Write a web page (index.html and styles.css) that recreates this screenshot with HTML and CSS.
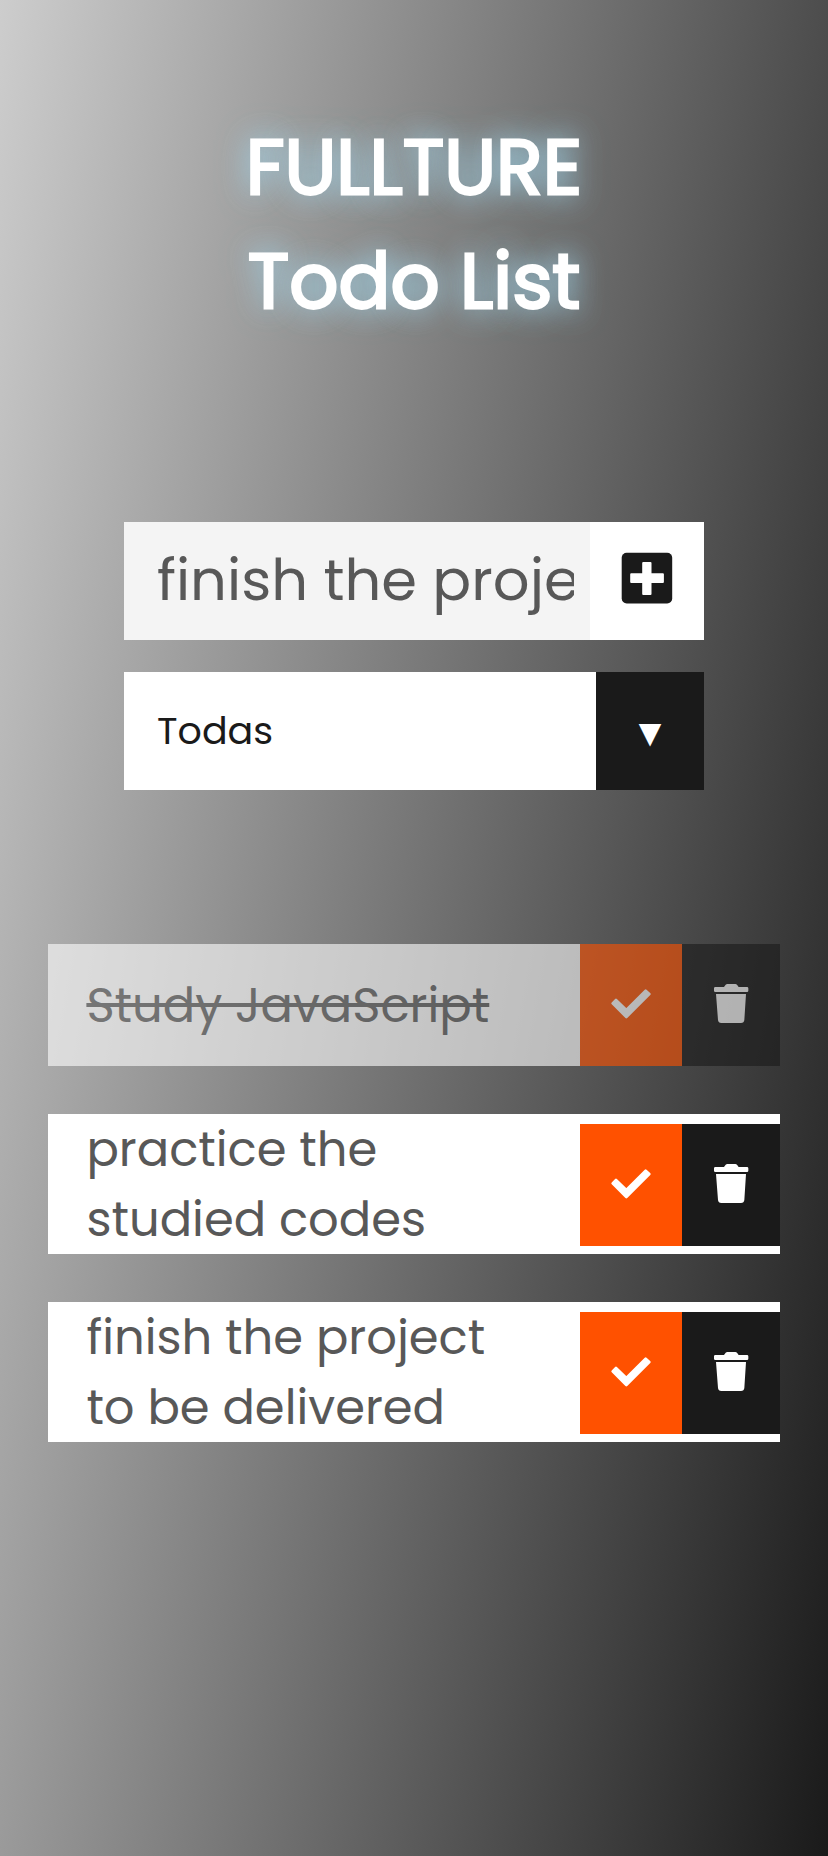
FILE: index.html
```html
<!DOCTYPE html>
<html lang="en">
<head>
<meta charset="utf-8">
<title>Todo List</title>
<link rel="stylesheet" href="styles.css">
</head>
<body>
<svg class="sprite" aria-hidden="true">
  <symbol id="check" viewBox="60 42 306 366"><path d="M158 220 168 210 199 240 257 182 268 192 199 261Z" stroke-width="8" stroke-linejoin="round"/></symbol>
  <symbol id="trash" viewBox="366 42 294 366"><path d="M466 171h26l5-7q2-2 5-2h24q3 0 5 2l5 7h25q4 0 4 4v7q0 4-4 4h-95q-4 0-4-4v-7q0-4 4-4zM468 192h90l-5 78q-1 9-10 9h-59q-9 0-10-9z" stroke="none"/></symbol>
</svg>
<header class="header">
  <h1 class="title">FULLTURE<br>Todo List</h1>
</header>
<form class="form">
  <div class="entry">
    <input class="entry-input" type="text" value="finish the project" aria-label="Task">
    <button class="entry-add" type="button" aria-label="Add"><svg viewBox="0 0 114 118"><rect x="31.700" y="30.800" width="50.500" height="50.700" rx="5"/><path class="cut" d="M53.200 40h7.300q1 0 1 1v10.300h11.400q1 0 1 1v7.600q0 1-1 1h-11.400v11q0 1-1 1h-7.300q-1 0-1-1v-11h-11q-1 0-1-1v-7.600q0-1 1-1h11v-10.300q0-1 1-1z"/></svg></button>
  </div>
  <div class="filter">
    <div class="filter-value">Todas</div>
    <div class="filter-arrow">▼</div>
  </div>
</form>
<ul class="list">
  <li class="todo done">
    <p class="text">Study JavaScript</p>
    <button class="check" type="button" aria-label="Complete"><svg><use href="#check"/></svg></button>
    <button class="trash" type="button" aria-label="Delete"><svg><use href="#trash"/></svg></button>
  </li>
  <li class="todo">
    <p class="text">practice the<br>studied codes</p>
    <button class="check" type="button" aria-label="Complete"><svg><use href="#check"/></svg></button>
    <button class="trash" type="button" aria-label="Delete"><svg><use href="#trash"/></svg></button>
  </li>
  <li class="todo">
    <p class="text">finish the project<br>to be delivered</p>
    <button class="check" type="button" aria-label="Complete"><svg><use href="#check"/></svg></button>
    <button class="trash" type="button" aria-label="Delete"><svg><use href="#trash"/></svg></button>
  </li>
</ul>
</body>
</html>
```
FILE: styles.css
```css
* { margin: 0; padding: 0; box-sizing: border-box; }
body {
  min-height: 1856px;
  background: linear-gradient(100deg, #cdcdcd, #1a1a1a);
  font-family: Poppins, sans-serif;
  color: #1a1a1a;
}
button { border: 0; display: block; }
svg { display: block; }
.sprite { display: none; }
.header { height: 522px; padding-top: 110px; }
.title {
  text-align: center;
  font-size: 76.8px;
  font-weight: 400;
  line-height: 114px;
  color: #fff;
  -webkit-text-stroke: 2.8px #fff;
  text-shadow: 0 0 28px #a3d8ee, 0 0 32px rgba(163, 216, 238, 0.6);
}
.form { width: 580px; margin: 0 auto; display: flex; flex-direction: column; gap: 32px; }
.entry, .filter { display: flex; height: 118px; background: #fff; }
.entry-input {
  width: 466px;
  padding: 0 16px 2px 33px;
  border: 0;
  background: #f4f4f4;
  font: 57.6px Poppins, sans-serif;
  color: #585858;
}
.entry-add { width: 114px; background: #fff; }
.entry-add svg { width: 114px; height: 118px; fill: #1a1a1a; }
.entry-add .cut { fill: #fff; }
.filter { font-size: 38px; line-height: 118px; }
.filter-value { flex: 1; padding-left: 33px; }
.filter-arrow { width: 108px; padding-top: 2px; text-align: center; color: #fff; background: #1a1a1a; font-size: 38.4px; }
.list { list-style: none; margin: 154px 48px 0; display: flex; flex-direction: column; gap: 48px; }
.todo { display: flex; align-items: center; height: 140px; padding-top: 2px; background: #fff; }
.done { height: 122px; padding-top: 0; opacity: 0.6; }
.text { flex: 1; padding-left: 38.4px; font-size: 48px; line-height: 70px; color: #585858; white-space: nowrap; }
.done .text { padding-top: 2px; text-decoration: line-through 4px; }
.check, .trash { height: 122px; fill: #fff; stroke: #fff; }
.check { width: 102px; background: #ff5100; }
.trash { width: 98px; background: #1a1a1a; }
.check svg, .trash svg { width: 100%; height: 122px; }
```
